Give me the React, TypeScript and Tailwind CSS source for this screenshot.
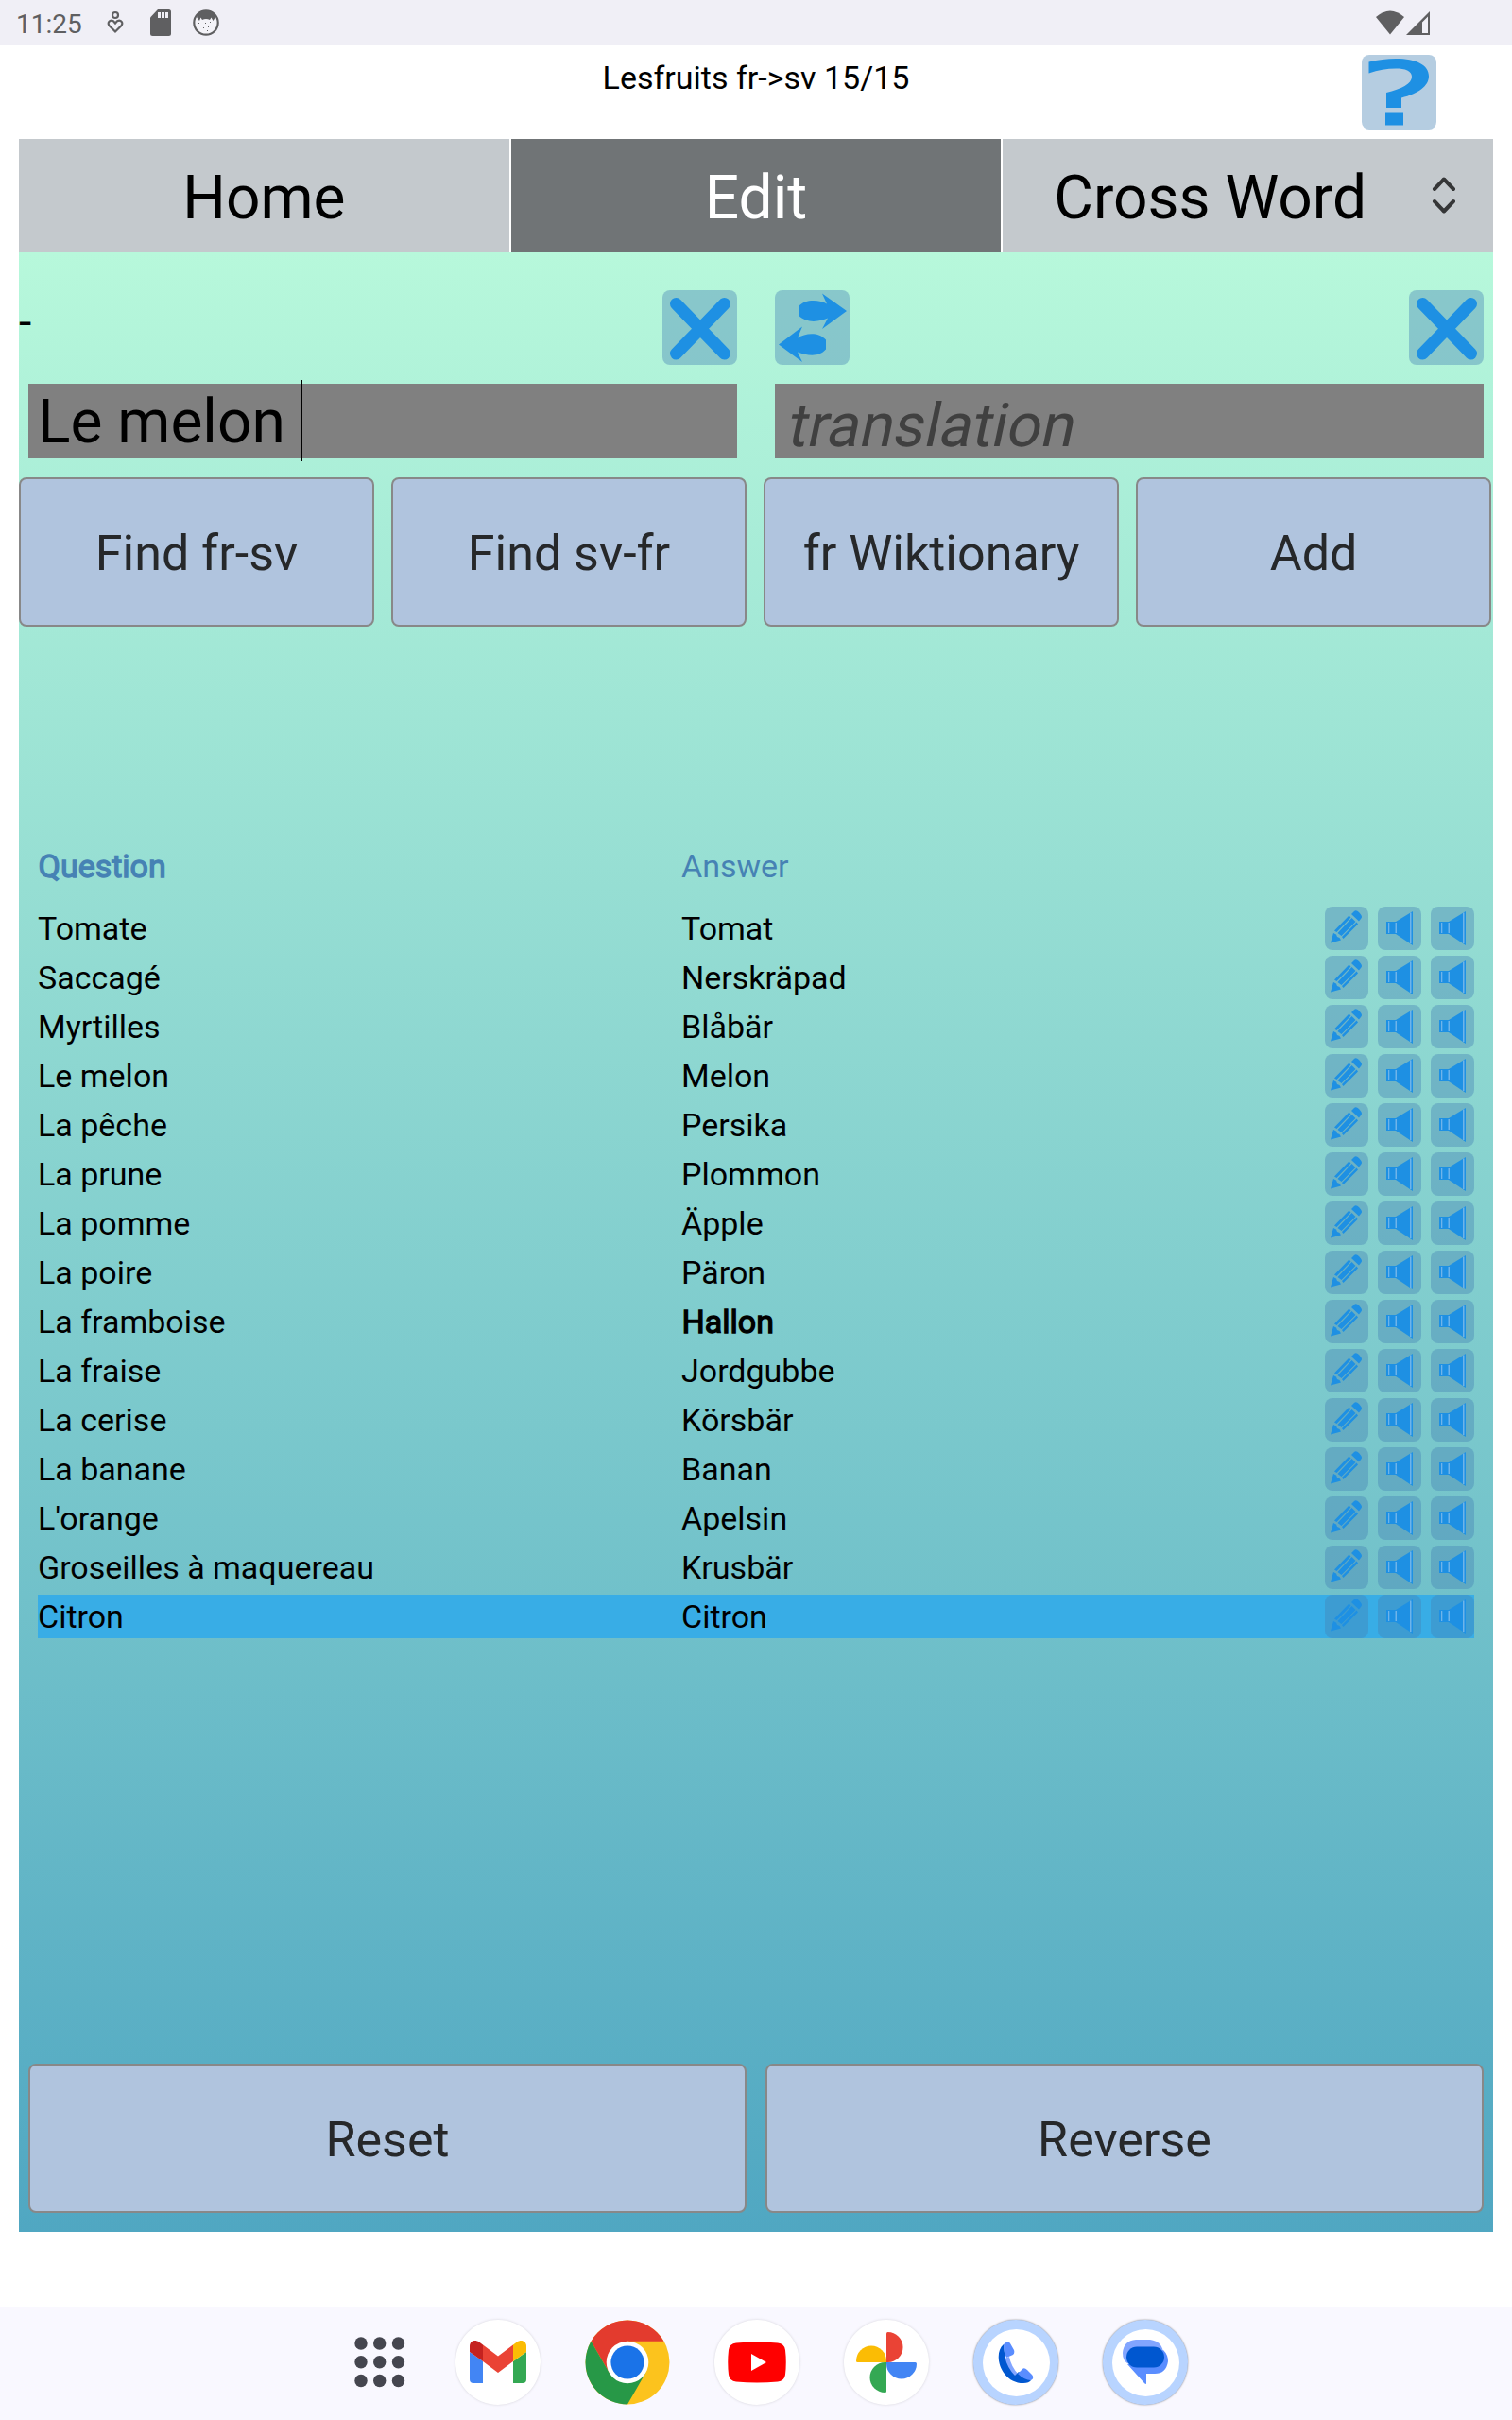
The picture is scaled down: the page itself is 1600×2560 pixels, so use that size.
import type { ReactNode } from "react";

const words: [string, string][] = [
  ["Tomate", "Tomat"],
  ["Saccagé", "Nerskräpad"],
  ["Myrtilles", "Blåbär"],
  ["Le melon", "Melon"],
  ["La pêche", "Persika"],
  ["La prune", "Plommon"],
  ["La pomme", "Äpple"],
  ["La poire", "Päron"],
  ["La framboise", "Hallon"],
  ["La fraise", "Jordgubbe"],
  ["La cerise", "Körsbär"],
  ["La banane", "Banan"],
  ["L'orange", "Apelsin"],
  ["Groseilles à maquereau", "Krusbär"],
  ["Citron", "Citron"],
];

function StatusBar() {
  return (
    <header className="flex h-12 shrink-0 items-center bg-[#f0eff6] text-[#5f5f61]">
      <span className="ml-[17px] w-[72px] whitespace-nowrap pt-1 text-[28px] leading-8">11:25</span>
      <svg className="ml-[24px]" width="18" height="26" viewBox="0 0 18 26" fill="none" stroke="currentColor" strokeWidth="2.2">
        <circle cx="9" cy="5" r="3" />
        <path d="M9 22.500L2.500 16C-.5 12 5 8 9 13.500C13 8 18.500 12 15.500 16Z" />
      </svg>
      <svg className="ml-[28px]" width="22" height="28" viewBox="0 0 22 28">
        <path fill="currentColor" d="M8 0H19.500Q22 0 22 2.500V25.500Q22 28 19.500 28H2.500Q0 28 0 25.500V8.500Z" />
        <path fill="#f0eff6" d="M8 3h3v6H8zM12 3h3v6h-3zM16 3h3v6h-3z" />
      </svg>
      <svg className="ml-[23px]" width="28" height="28" viewBox="0 0 28 28">
        <circle cx="14" cy="14" r="12.700" fill="#f4f3f8" stroke="currentColor" strokeWidth="2.200" />
        <path fill="currentColor" d="M4 8Q6 1 14 1Q22 1 24 8L21.500 12L19.500 8.500L18 11Q14 9 10 11L8.500 8.500L7 12Z" />
        <path fill="currentColor" d="M8 17h1v1h-1zM13 14h1v1h-1zM18 13h1v1h-1zM16 18h1v1h-1zM11 19h1v1h-1zM15 22h1v1h-1zM20 17h1v1h-1zM6 14h1v1h-1z" />
      </svg>
      <svg className="ml-auto" width="30" height="26" viewBox="0 0 30 26">
        <path fill="currentColor" d="M0 7Q15 -6 30 7L15 25.500Z" />
      </svg>
      <svg className="ml-[2px] mr-[86px]" width="26" height="26" viewBox="0 0 26 26">
        <path fill="currentColor" fillRule="evenodd" d="M0 26L25 1V26ZM17 24H23V6.500L17 12.500Z" />
      </svg>
    </header>
  );
}

function IconTile({ className, children }: { className: string; children: ReactNode }) {
  return (
    <button className={`flex shrink-0 items-center justify-center rounded-lg bg-[#4682b4]/40 ${className}`}>
      {children}
    </button>
  );
}

function CloseIcon() {
  return (
    <svg width="79" height="79" viewBox="0 0 79 79" stroke="#1e90e3" strokeWidth="13" strokeLinecap="round">
      <path d="M14.500 14.500L65.500 67M65.500 14.500L14.500 67" />
    </svg>
  );
}

function SwapIcon() {
  return (
    <svg width="79" height="79" viewBox="0 0 79 79" fill="#1e90e3">
      <path d="M25 17.500C32 8.500 48 10.500 55 14.500L50 3.500L76 22L50 41L56 29.500C48 33 34 36 25 26.500Z" />
      <path d="M54 52.500C46 43.500 32 45.500 24 50.500L29 38.500L4 57.500L29 76L24 65.500C34 69 46 71.500 54 62.500Z" />
    </svg>
  );
}

function HelpIcon() {
  return (
    <svg width="79" height="79" viewBox="0 0 79 79" fill="#1e90e3">
      <path d="M7.500 7.500Q22 4 36 4C58 4 71 11 71 22.500C71 33 60 41 42 45.500V56H26V40C42 36 53 31 53 23C53 17 46 14.500 36 14.500Q22 14.500 7.500 19.500Z" />
      <path d="M25 61.500H44V74.500H25Z" />
    </svg>
  );
}

function PencilIcon() {
  return (
    <svg width="46" height="46" viewBox="0 0 46 46" fill="#1e90e3">
      <path d="M28 8L31 5Q33 3 36 6L38 8.500Q40 11 38 13L36 15.500Z" />
      <path d="M25.500 9.500L27.500 11.500L12.500 27L10 25.500ZM28.500 12L32.500 16L17.500 31L13.500 28ZM33.500 16.500L35 18.500L19.500 34L18 32Z" />
      <path d="M9 28L12 29.500L13 32L15.500 33L17 35.500L6 38.500Z" />
    </svg>
  );
}

function SpeakerIcon() {
  return (
    <svg width="46" height="46" viewBox="0 0 46 46" fill="#1e90e3">
      <path d="M9 16H19L37 5V41L19 29H9Z" />
      <path fill="#6fb4ea" d="M11 17h1.300v11H11zM18.500 17h1.500v11h-1.500zM34 6.500h1.500v32.500H34z" />
    </svg>
  );
}

function ActionButton({ label }: { label: string }) {
  return (
    <button className="rounded-lg border-2 border-[#888] bg-[#b0c4de] pt-1 text-[52px] leading-none text-[#26282a]">
      {label}
    </button>
  );
}

function DockIcon({ className, children }: { className: string; children: ReactNode }) {
  return (
    <div className={`flex h-[90px] w-[90px] items-center justify-center rounded-full ${className}`}>
      {children}
    </div>
  );
}

function Dock() {
  const white = "bg-white shadow-[0_0_3px_rgba(0,0,0,0.15)]";
  const blue = "bg-[#b8d4ff] shadow-[0_0_2px_rgba(0,0,0,0.5)]";
  return (
    <footer className="mt-auto flex h-[120px] shrink-0 items-center bg-[#f9f8ff] pb-[2px] pl-[375px]">
      <svg width="54" height="54" viewBox="0 0 54 54" fill="#45464f">
        {[7, 26.7, 46.5].map((y) => [7, 26.7, 46.5].map((x) => <circle key={`${x}-${y}`} cx={x} cy={y} r="6.700" />))}
      </svg>
      <div className="ml-[53px] flex gap-[47px]">
        <DockIcon className={white}>
          <svg width="60" height="46" viewBox="0 0 60 46">
            <path fill="#4285f4" d="M0 12L14 22V45H4Q0 45 0 41Z" />
            <path fill="#34a853" d="M46 22L60 12V41Q60 45 56 45H46Z" />
            <path fill="#c5221f" d="M0 12V6C0 0 6 -1.500 10 1.500L14 4.500V22Z" />
            <path fill="#fbbc04" d="M60 12V6C60 0 54 -1.500 50 1.500L46 4.500V22Z" />
            <path fill="#ea4335" d="M14 4.500L30 16.500L46 4.500V22L30 34L14 22Z" />
          </svg>
        </DockIcon>
        <DockIcon className="">
          <svg width="90" height="90" viewBox="0 0 90 90">
            <circle cx="45" cy="45" r="44.500" fill="#fcc31d" />
            <path fill="#e33b2e" d="M6.500 22.700A44.500 44.500 0 0 1 83.500 22.700H45L25.700 56Z" />
            <path fill="#279847" d="M6.500 22.700A44.500 44.500 0 0 0 45 89.500L64.300 56L45 67L25.700 56Z" />
            <circle cx="45" cy="45" r="22.300" fill="white" />
            <circle cx="45" cy="45" r="17.600" fill="#1a73e8" />
          </svg>
        </DockIcon>
        <DockIcon className={white}>
          <svg width="62" height="44" viewBox="0 0 62 44">
            <path fill="#f00" d="M9 1.500Q31 -.5 53 1.500Q60 2 61 9Q62.500 22 61 35Q60 42 53 42.500Q31 44.500 9 42.500Q2 42 1 35Q-.5 22 1 9Q2 2 9 1.500Z" />
            <path fill="white" d="M25 13L41 22L25 31Z" />
          </svg>
        </DockIcon>
        <DockIcon className={white}>
          <svg width="64" height="64" viewBox="0 0 64 64">
            <path fill="#ea4335" d="M32 32V1.500Q32 0 33.500 0A16 16 0 0 1 33.500 32Z" />
            <path fill="#4285f4" d="M32 32H62.500Q64 32 64 33.500A16 16 0 0 1 32 33.500Z" />
            <path fill="#34a853" d="M32 32V62.500Q32 64 30.500 64A16 16 0 0 1 30.500 32Z" />
            <path fill="#fbbc04" d="M32 32H1.500Q0 32 0 30.500A16 16 0 0 1 32 30.500Z" />
          </svg>
        </DockIcon>
        <DockIcon className={blue}>
          <div className="flex h-[71px] w-[71px] items-center justify-center rounded-full bg-white">
            <svg width="40" height="46" viewBox="0 0 40 46">
              <path fill="#82a5ff" d="M8 19L13 17Q15 28 23 36L19 40Q8 30 8 19Z" />
              <path fill="#0057d0" d="M7 4C-5 14 4 45 28 45Q34 45 36 42L23 33L19 37Q11 29 8.500 18Z" />
              <path fill="#5a8dff" d="M7 4Q12 -1 14 3L18 10Q19 13 17 15L10 18Q7 12 7 4ZM22 35L27 30Q29 28 32 31L37 36Q40 40 36 42Q29 42 22 35Z" />
            </svg>
          </div>
        </DockIcon>
        <DockIcon className={blue}>
          <div className="flex h-[71px] w-[71px] items-center justify-center rounded-full bg-white">
            <svg width="48" height="48" viewBox="0 0 48 48">
              <path fill="#82a5ff" d="M14 0H29Q43 2 43 16L5 25Q0 22 0 14Q1 1 14 0Z" />
              <path fill="#5a8dff" d="M43 11Q48 16 48 23Q46 36 34 36H25V46Q25 48 23 46L5 26Z" />
              <rect fill="#0057d0" x="4" y="7.500" width="40" height="22" rx="11" />
            </svg>
          </div>
        </DockIcon>
      </div>
    </footer>
  );
}

export default function App() {
  return (
    <div className="flex h-[2560px] w-[1600px] flex-col overflow-hidden bg-white font-['Roboto',sans-serif] text-black">
      <StatusBar />

      <div className="grid h-[99px] shrink-0 grid-cols-[1fr_auto_1fr] items-start px-5">
        <h1 className="col-start-2 pt-[14px] text-[34px] leading-10">Lesfruits fr-&gt;sv 15/15</h1>
        <IconTile className="mr-[60px] mt-[10px] h-[79px] w-[79px] justify-self-end">
          <HelpIcon />
        </IconTile>
      </div>

      <nav className="mx-5 grid h-[120px] shrink-0 grid-cols-3 gap-[2px] text-[64px]">
        <button className="bg-[#c4c9cd] pt-[5px]">Home</button>
        <button className="bg-[#707476] pt-[5px] text-white">Edit</button>
        <button className="flex items-center bg-[#c4c9cd]">
          <span className="flex-1 pr-[15px] pt-[5px]">Cross Word</span>
          <svg className="mr-[39px]" width="26" height="42" viewBox="0 0 26 42" fill="none" stroke="#353637" strokeWidth="4" strokeLinecap="round" strokeLinejoin="round">
            <path d="M3 14L13 3.500L23 14M3 27L13 37.500L23 27" />
          </svg>
        </button>
      </nav>

      <main className="mx-5 flex h-[2094px] shrink-0 flex-col bg-linear-to-b from-[#b7f8db] to-[#50a7c2] [--tw-gradient-position:to_bottom]">
        <div className="mt-10 flex h-[79px] items-start pr-[10px]">
          <span className="flex-1 pt-[6px] text-[48px] leading-[56px]">-</span>
          <IconTile className="h-[79px] w-[79px]"><CloseIcon /></IconTile>
          <IconTile className="ml-10 h-[79px] w-[79px]"><SwapIcon /></IconTile>
          <IconTile className="ml-[592px] h-[79px] w-[79px]"><CloseIcon /></IconTile>
        </div>

        <div className="mt-5 grid h-[79px] grid-cols-2 grid-rows-[79px] gap-10 px-[10px] text-[64px]">
          <div className="flex items-center bg-[#808080] pl-[10px]">
            <span className="whitespace-pre pt-[2px] leading-[79px]">Le melon </span>
            <span className="-mb-1 -mt-[6px] h-[86px] w-[2px] bg-black" />
          </div>
          <div className="bg-[#808080] pl-[11px] pt-[5px] text-[#404040]">
            <span className="block w-fit origin-[0_62px] -skew-x-12 leading-[79px]">translation</span>
          </div>
        </div>

        <div className="mr-[2px] mt-[20px] grid h-[158px] grid-cols-4 gap-[18px]">
          <ActionButton label="Find fr-sv" />
          <ActionButton label="Find sv-fr" />
          <ActionButton label="fr Wiktionary" />
          <ActionButton label="Add" />
        </div>

        <div className="mx-5 mt-[232px] grid grid-cols-[681px_1fr] text-[34px] leading-[42px] text-[#4682b4]">
          <span className="pl-[0.5px] [-webkit-text-stroke:1.3px]">Question</span>
          <span>Answer</span>
        </div>

        <ul className="mx-5 mt-[22px] flex flex-col gap-[6px]">
          {words.map(([question, answer], index) => (
            <li
              key={question}
              className={`flex h-[46px] items-center text-[34px] leading-[46px] ${index === 14 ? "bg-[#38ade6]" : ""}`}
            >
              <span className="w-[681px]">{question}</span>
              <span className={`flex-1 ${answer === "Hallon" ? "pl-[0.5px] [-webkit-text-stroke:1.3px]" : ""}`}>{answer}</span>
              <div className="flex gap-[10px]">
                <IconTile className="h-[46px] w-[46px]"><PencilIcon /></IconTile>
                <IconTile className="h-[46px] w-[46px]"><SpeakerIcon /></IconTile>
                <IconTile className="h-[46px] w-[46px]"><SpeakerIcon /></IconTile>
              </div>
            </li>
          ))}
        </ul>

        <div className="mb-5 mt-auto grid h-[158px] grid-cols-2 gap-5 px-[10px]">
          <ActionButton label="Reset" />
          <ActionButton label="Reverse" />
        </div>
      </main>

      <Dock />
    </div>
  );
}
